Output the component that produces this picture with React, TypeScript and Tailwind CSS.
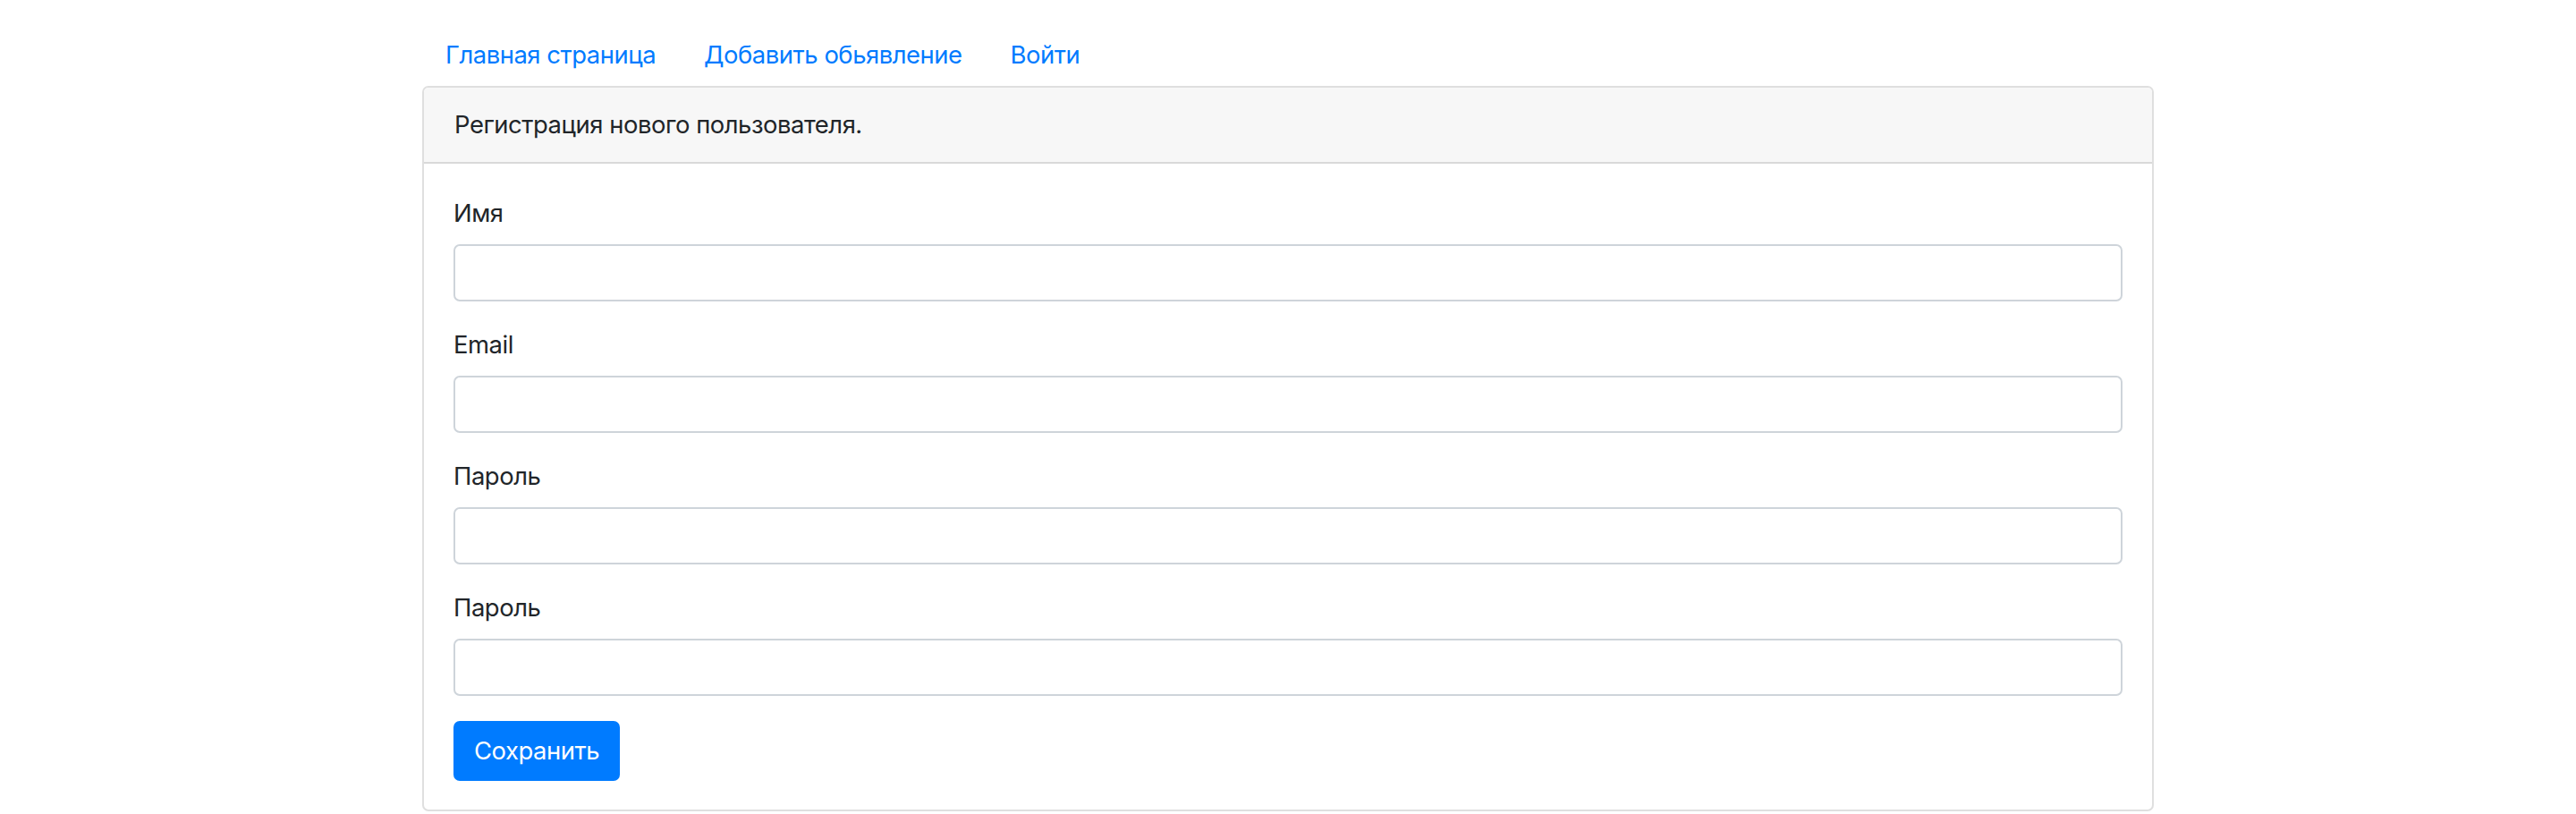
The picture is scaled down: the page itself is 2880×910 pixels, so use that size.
import React from 'react'

const links = ['Главная страница', 'Добавить обьявление', 'Войти']
const fields = ['Имя', 'Email', 'Пароль', 'Пароль']

export default function App() {
  return (
    <div className="min-h-[910px] bg-white text-[#212529] text-[27.4px] leading-[41px] tracking-[-0.45px] [font-family:Inter,'Noto_Sans',sans-serif]">
      <div className="mx-auto w-[1936px] pt-[27px]">
        <nav className="flex -ml-px">
          {links.map((l) => (
            <a key={l} href="#" className="px-[27px] py-[14px] text-[#007bff]">
              {l}
            </a>
          ))}
        </nav>
        <div className="rounded-[7px] border-2 border-[#dfdfdf] overflow-hidden">
          <div className="bg-[#f7f7f7] border-b-2 border-[#d9d9d9] px-[34px] py-[21px]">
            Регистрация нового пользователя.
          </div>
          <form className="px-[33px] pt-[35px] pb-[32px]" onSubmit={(e) => e.preventDefault()}>
            {fields.map((f, i) => (
              <div key={i} className="mb-[28px]">
                <label className="block mb-[14px]">{f}</label>
                <input
                  type={f === 'Пароль' ? 'password' : 'text'}
                  className="block w-full h-[64px] rounded-[7px] border-2 border-[#ced4da] bg-white px-[20px] outline-none"
                />
              </div>
            ))}
            <button
              type="submit"
              className="h-[67px] rounded-[7px] bg-[#007bff] px-[23px] text-white"
            >
              Сохранить
            </button>
          </form>
        </div>
      </div>
    </div>
  )
}
